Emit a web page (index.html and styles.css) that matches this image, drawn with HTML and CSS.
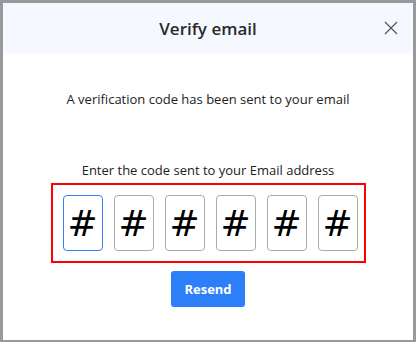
FILE: index.html
```html
<!DOCTYPE html>
<html lang="en">
<head>
    <meta charset="UTF-8">
    <meta name="viewport" content="width=device-width, initial-scale=1.0">
    <title>Verify email</title>
    <link rel="stylesheet" href="styles.css">
</head>
<body>

    <div class="modal">
        <div class="modal-header">
            <span></span>
            <div class="modal-title">Verify email</div>
            <button class="close-button" aria-label="Close">
                <svg width="14" height="14" viewBox="0 0 14 14">
                    <path d="M1 1 L13 13 M13 1 L1 13" stroke="#555" stroke-width="1.2" fill="none"/>
                </svg>
            </button>
        </div>

        <div class="modal-body">
            <div class="sent-text">A verification code has been sent to your email</div>
            <div class="enter-text">Enter the code sent to your Email address</div>

            <div class="code-box">
                <input class="code-input active" type="text" value="#" maxlength="1">
                <input class="code-input" type="text" value="#" maxlength="1">
                <input class="code-input" type="text" value="#" maxlength="1">
                <input class="code-input" type="text" value="#" maxlength="1">
                <input class="code-input" type="text" value="#" maxlength="1">
                <input class="code-input" type="text" value="#" maxlength="1">
            </div>

            <button class="resend-button">Resend</button>
        </div>
    </div>

</body>
</html>
```

FILE: styles.css
```css
body {
    margin: 0;
    font-family: "Open Sans", sans-serif;
    background-color: #fff;
}
.modal {
    width: 416px;
    height: 342px;
    box-sizing: border-box;
    border: 3px solid #999;
    border-bottom-width: 2px;
    background-color: #fff;
}
.modal-header {
    height: 50px;
    background-color: #f5f9ff;
    display: grid;
    grid-template-columns: 1fr auto 1fr;
    align-items: center;
}
.modal-title {
    font-size: 17px;
    font-weight: 600;
    color: #2a2a2a;
}
.close-button {
    justify-self: end;
    margin-right: 15px;
    padding: 0;
    border: none;
    background: none;
    display: flex;
}
.modal-body {
    display: flex;
    flex-direction: column;
    align-items: center;
}
.sent-text {
    margin-top: 37px;
    font-size: 13px;
    color: #222;
}
.enter-text {
    margin-top: 53px;
    font-size: 13px;
    color: #222;
}
.code-box {
    margin-top: 4px;
    border: 2px solid red;
    padding: 10px 6px 10px 10px;
    display: flex;
    gap: 11px;
}
.code-input {
    width: 40px;
    height: 56px;
    box-sizing: border-box;
    border: 1px solid #aaa;
    border-radius: 4px;
    font-family: "DejaVu Sans", sans-serif;
    font-size: 36px;
    text-align: center;
    color: #000;
    padding: 0;
    outline: none;
}
.code-input.active {
    border-color: #3b7cf5;
}
.resend-button {
    margin-top: 8px;
    width: 74px;
    height: 36px;
    border: none;
    border-radius: 3px;
    background-color: #2d7ff9;
    color: #fff;
    font-family: "Open Sans", sans-serif;
    font-size: 13px;
    font-weight: 700;
}
```
